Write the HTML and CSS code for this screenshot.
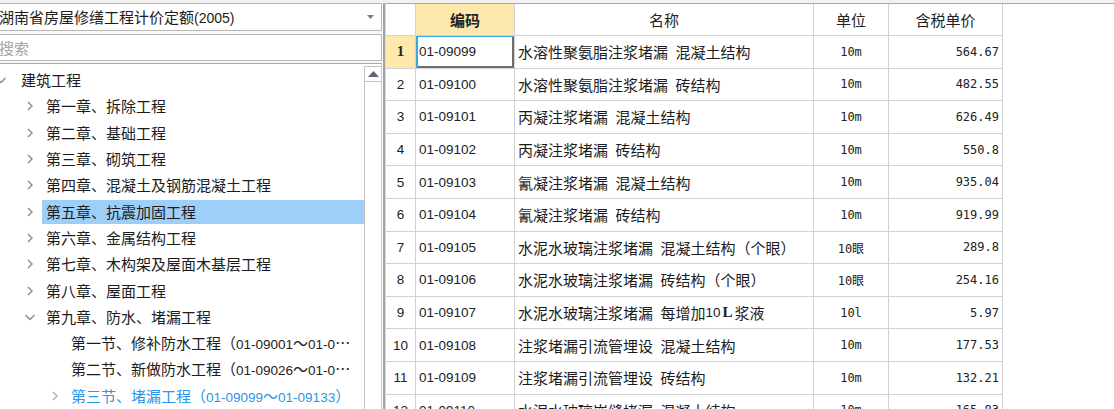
FILE: index.html
```html
<!DOCTYPE html>
<html lang="zh-CN">
<head>
<meta charset="utf-8">
<title>定额库</title>
<link rel="stylesheet" href="styles.css">
</head>
<body>
<div class="app">
  <aside class="left">
    <div class="combo">
      <span class="combo-text">湖南省房屋修缮工程计价定额<span class="lat">(2005)</span></span>
      <svg class="combo-arrow" width="7" height="4" viewBox="0 0 7 4"><path d="M0 0 H7 L3.5 4 Z" fill="#7d7d7d"/></svg>
    </div>
    <div class="search"><span class="placeholder">搜索</span></div>
    <div class="tree">
      <div class="tree-list">
        <div class="node l0"><span class="chev"><svg width="10" height="10" viewBox="0 0 10 10"><path d="M0.5 3 L5 7.5 L9.5 3" /></svg></span><span class="label">建筑工程</span></div>
        <div class="node l1"><span class="chev"><svg width="10" height="10" viewBox="0 0 10 10"><path d="M3 1 L7 5 L3 9" /></svg></span><span class="label">第一章、拆除工程</span></div>
        <div class="node l1"><span class="chev"><svg width="10" height="10" viewBox="0 0 10 10"><path d="M3 1 L7 5 L3 9" /></svg></span><span class="label">第二章、基础工程</span></div>
        <div class="node l1"><span class="chev"><svg width="10" height="10" viewBox="0 0 10 10"><path d="M3 1 L7 5 L3 9" /></svg></span><span class="label">第三章、砌筑工程</span></div>
        <div class="node l1"><span class="chev"><svg width="10" height="10" viewBox="0 0 10 10"><path d="M3 1 L7 5 L3 9" /></svg></span><span class="label">第四章、混凝土及钢筋混凝土工程</span></div>
        <div class="node l1 selected"><span class="chev"><svg width="10" height="10" viewBox="0 0 10 10"><path d="M3 1 L7 5 L3 9" /></svg></span><span class="label">第五章、抗震加固工程</span></div>
        <div class="node l1"><span class="chev"><svg width="10" height="10" viewBox="0 0 10 10"><path d="M3 1 L7 5 L3 9" /></svg></span><span class="label">第六章、金属结构工程</span></div>
        <div class="node l1"><span class="chev"><svg width="10" height="10" viewBox="0 0 10 10"><path d="M3 1 L7 5 L3 9" /></svg></span><span class="label">第七章、木构架及屋面木基层工程</span></div>
        <div class="node l1"><span class="chev"><svg width="10" height="10" viewBox="0 0 10 10"><path d="M3 1 L7 5 L3 9" /></svg></span><span class="label">第八章、屋面工程</span></div>
        <div class="node l1"><span class="chev"><svg width="10" height="10" viewBox="0 0 10 10"><path d="M0.5 3 L5 7.5 L9.5 3" /></svg></span><span class="label">第九章、防水、堵漏工程</span></div>
        <div class="node l2"><span class="chev"></span><span class="label">第一节、修补防水工程（<span class="lat">01-09001</span>～<span class="lat">01-09025</span>）</span></div>
        <div class="node l2"><span class="chev"></span><span class="label">第二节、新做防水工程（<span class="lat">01-09026</span>～<span class="lat">01-09098</span>）</span></div>
        <div class="node l2 current"><span class="chev"><svg width="10" height="10" viewBox="0 0 10 10"><path d="M3 1 L7 5 L3 9" /></svg></span><span class="label">第三节、堵漏工程（<span class="lat">01-09099</span>～<span class="lat">01-09133</span>）</span></div>
      </div>
      <div class="vscroll">
        <div class="vs-up"><svg width="11" height="6" viewBox="0 0 11 6"><path d="M0 6 L5.5 0 L11 6 Z" fill="#5b6677"/></svg></div>
      </div>
    </div>
  </aside>
  <div class="splitter"></div>
  <main class="grid">
    <div class="row head">
      <div class="h"></div>
      <div class="h active-col">编码</div>
      <div class="h">名称</div>
      <div class="h">单位</div>
      <div class="h">含税单价</div>
    </div>
    <div class="row">
      <div class="c num cur">1</div>
      <div class="c code sel">01-09099</div>
      <div class="c name">水溶性聚氨脂注浆堵漏&ensp;混凝土结构</div>
      <div class="c unit">10m</div>
      <div class="c price">564.67</div>
    </div>
    <div class="row">
      <div class="c num">2</div>
      <div class="c code">01-09100</div>
      <div class="c name">水溶性聚氨脂注浆堵漏&ensp;砖结构</div>
      <div class="c unit">10m</div>
      <div class="c price">482.55</div>
    </div>
    <div class="row">
      <div class="c num">3</div>
      <div class="c code">01-09101</div>
      <div class="c name">丙凝注浆堵漏&ensp;混凝土结构</div>
      <div class="c unit">10m</div>
      <div class="c price">626.49</div>
    </div>
    <div class="row">
      <div class="c num">4</div>
      <div class="c code">01-09102</div>
      <div class="c name">丙凝注浆堵漏&ensp;砖结构</div>
      <div class="c unit">10m</div>
      <div class="c price">550.8</div>
    </div>
    <div class="row">
      <div class="c num">5</div>
      <div class="c code">01-09103</div>
      <div class="c name">氰凝注浆堵漏&ensp;混凝土结构</div>
      <div class="c unit">10m</div>
      <div class="c price">935.04</div>
    </div>
    <div class="row">
      <div class="c num">6</div>
      <div class="c code">01-09104</div>
      <div class="c name">氰凝注浆堵漏&ensp;砖结构</div>
      <div class="c unit">10m</div>
      <div class="c price">919.99</div>
    </div>
    <div class="row">
      <div class="c num">7</div>
      <div class="c code">01-09105</div>
      <div class="c name">水泥水玻璃注浆堵漏&ensp;混凝土结构（个眼）</div>
      <div class="c unit">10眼</div>
      <div class="c price">289.8</div>
    </div>
    <div class="row">
      <div class="c num">8</div>
      <div class="c code">01-09106</div>
      <div class="c name">水泥水玻璃注浆堵漏&ensp;砖结构（个眼）</div>
      <div class="c unit">10眼</div>
      <div class="c price">254.16</div>
    </div>
    <div class="row">
      <div class="c num">9</div>
      <div class="c code">01-09107</div>
      <div class="c name">水泥水玻璃注浆堵漏&ensp;每增加<span class="lat">10</span><b class="bigL">L</b>浆液</div>
      <div class="c unit">10l</div>
      <div class="c price">5.97</div>
    </div>
    <div class="row">
      <div class="c num">10</div>
      <div class="c code">01-09108</div>
      <div class="c name">注浆堵漏引流管埋设&ensp;混凝土结构</div>
      <div class="c unit">10m</div>
      <div class="c price">177.53</div>
    </div>
    <div class="row">
      <div class="c num">11</div>
      <div class="c code">01-09109</div>
      <div class="c name">注浆堵漏引流管埋设&ensp;砖结构</div>
      <div class="c unit">10m</div>
      <div class="c price">132.21</div>
    </div>
    <div class="row">
      <div class="c num">12</div>
      <div class="c code">01-09110</div>
      <div class="c name">水泥水玻璃嵌缝堵漏&ensp;混凝土结构</div>
      <div class="c unit">10m</div>
      <div class="c price">165.83</div>
    </div>
  </main>
</div>
</body>
</html>
```

FILE: styles.css
```css
html, body {
  margin: 0;
  padding: 0;
  height: 100%;
  overflow: hidden;
  background: #f2f2f2;
}

body {
  font-family: "Noto Sans CJK SC", "Noto Sans", sans-serif;
  font-size: 15px;
  color: #1c1c1c;
}

.app {
  display: flex;
  height: 409px;
  padding-top: 3px;
  box-sizing: border-box;
}

.lat {
  font-family: "Liberation Sans", Arial, sans-serif;
  font-size: 13.5px;
}

/* ---------- left panel ---------- */
.left {
  width: 388px;
  margin-left: -6px;
  flex: none;
  display: flex;
  flex-direction: column;
  background: #f7f7f7;
}

.combo {
  height: 28px;
  box-sizing: border-box;
  border: 1px solid #b7b7b7;
  background: #fff;
  display: flex;
  align-items: center;
  justify-content: space-between;
  padding: 0 7px 0 4px;
  line-height: 26px;
  white-space: nowrap;
}

.combo-text .lat {
  font-size: 14px;
}

.combo-arrow {
  flex: none;
}

.search {
  margin-top: 3px;
  height: 27px;
  box-sizing: border-box;
  border: 1px solid #b7b7b7;
  background: #fff;
  padding-left: 4px;
  line-height: 25px;
}

.placeholder {
  color: #a3a3a3;
}

.tree {
  margin-top: 2px;
  flex: 1;
  min-height: 0;
  display: flex;
  background: #fff;
  border-top: 1px solid #a9a9a9;
  border-right: 1px solid #c6c6c6;
}

.tree-list {
  flex: 1;
  min-width: 0;
  padding-top: 3px;
}

.node {
  height: 26.3px;
  display: flex;
  align-items: center;
  white-space: nowrap;
}

.node.l0 { padding-left: 2px; }
.node.l1 { padding-left: 27px; }
.node.l2 { padding-left: 52px; }

.chev {
  width: 18px;
  height: 100%;
  flex: none;
  display: flex;
  align-items: center;
}

.chev svg {
  margin-left: 4px;
  fill: none;
  stroke: #8a8a8a;
  stroke-width: 1.4;
}

.node.l0 .chev svg {
  margin-left: 0;
}

.label {
  flex: 1;
  min-width: 0;
  margin-left: 3px;
  padding: 0 9px 0 4px;
  height: 24px;
  line-height: 24px;
  overflow: hidden;
  text-overflow: ellipsis;
}

.node.selected .label {
  background: #9dcff9;
}

.node.current .label {
  color: #2c95e8;
}

.node.current .chev svg {
  stroke: #b0b0b0;
}

.vscroll {
  width: 16px;
  flex: none;
  margin-top: 2px;
  border-left: 1px solid #c2c2c2;
  background: #fff;
}

.vs-up {
  height: 14px;
  border-top: 1px solid #c2c2c2;
  border-bottom: 1px solid #c2c2c2;
  display: flex;
  align-items: center;
  justify-content: center;
}

/* ---------- splitter ---------- */
.splitter {
  width: 4px;
  flex: none;
  background: linear-gradient(to right, #ffffff 0 1px, #a2a2a2 1px 3px, #dadada 3px 4px);
}

/* ---------- grid ---------- */
.grid {
  flex: 1;
  background: #fff;
  border-top: 1px solid #a8a8a8;
  overflow: hidden;
}

.row {
  display: grid;
  grid-template-columns: 30px 99px 299px 75px 114px;
  height: 32.6px;
}

.row.head {
  height: 32px;
}

.h,
.c {
  box-sizing: border-box;
  border-right: 1px solid #d2d2d2;
  border-bottom: 1px solid #d2d2d2;
  display: flex;
  align-items: center;
  white-space: nowrap;
  overflow: hidden;
}

.h {
  justify-content: center;
  font-size: 15px;
  color: #222;
}

.h.active-col {
  background: #fce9ab;
  font-weight: bold;
}

.c.num {
  justify-content: center;
  font-family: "Liberation Sans", Arial, sans-serif;
  font-size: 13.5px;
  color: #222;
}

.c.num.cur {
  background: #fce9ab;
  font-family: "Liberation Serif", "Times New Roman", serif;
  font-weight: bold;
  font-size: 15px;
}

.c.code {
  padding-left: 3px;
  font-family: "Liberation Sans", Arial, sans-serif;
  font-size: 13.5px;
  color: #222;
}

.c.code.sel {
  box-shadow: inset 2px 1px 0 0 #38a6e0, inset -2px -2px 0 0 #6e6e6e;
}

.c.name {
  padding-left: 3px;
}

.bigL {
  font-family: "Liberation Serif", "Times New Roman", serif;
  font-size: 15px;
  margin: 0 2px;
}

.c.unit {
  justify-content: center;
  font-family: "DejaVu Sans Mono", "Liberation Mono", monospace;
  font-size: 12px;
  color: #222;
}

.c.price {
  justify-content: flex-end;
  padding-right: 3px;
  font-family: "DejaVu Sans Mono", "Liberation Mono", monospace;
  font-size: 12px;
  color: #222;
}
```
